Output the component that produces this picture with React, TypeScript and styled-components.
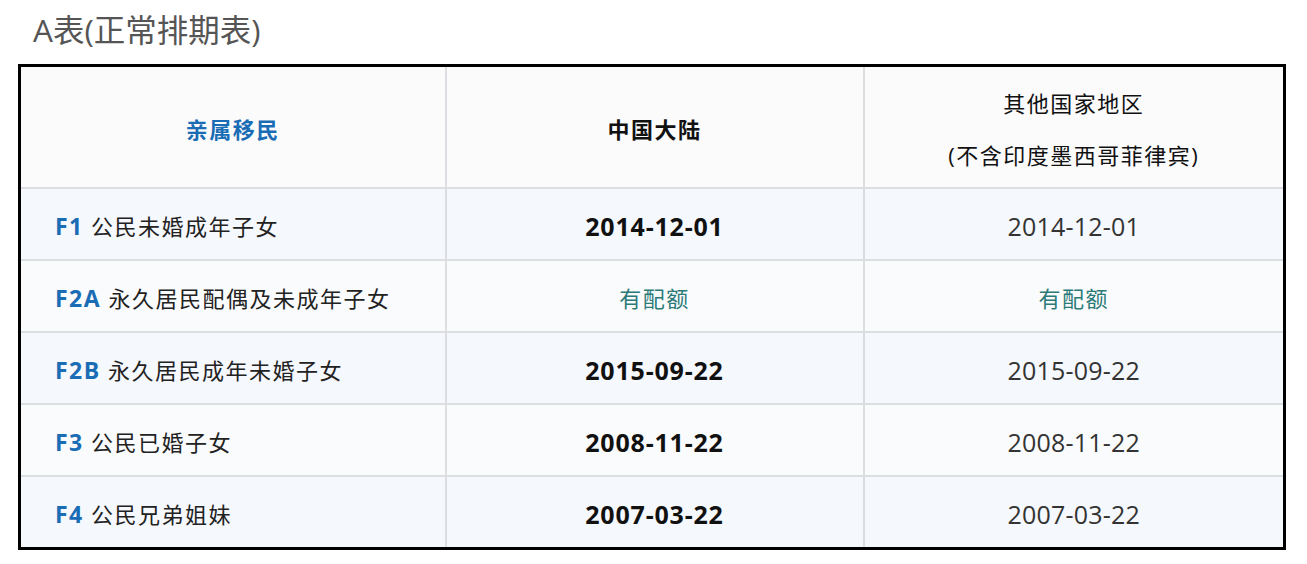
import React from "react";
import styled, { createGlobalStyle } from "styled-components";

const GlobalStyle = createGlobalStyle`
  body {
    margin: 0;
    background: #fff;
    font-family: "Open Sans", "Noto Sans CJK SC", sans-serif;
  }
`;

type Row = {
  code: string;
  label: string;
  china: string;
  other: string;
};

const rows: Row[] = [
  { code: "F1", label: "公民未婚成年子女", china: "2014-12-01", other: "2014-12-01" },
  { code: "F2A", label: "永久居民配偶及未成年子女", china: "有配额", other: "有配额" },
  { code: "F2B", label: "永久居民成年未婚子女", china: "2015-09-22", other: "2015-09-22" },
  { code: "F3", label: "公民已婚子女", china: "2008-11-22", other: "2008-11-22" },
  { code: "F4", label: "公民兄弟姐妹", china: "2007-03-22", other: "2007-03-22" },
];

const App: React.FC = () => {
  return (
    <Page>
      <GlobalStyle />
      <Title>A表(正常排期表)</Title>
      <Table>
        <colgroup>
          <col style={{ width: 426 }} />
          <col style={{ width: 418 }} />
          <col />
        </colgroup>
        <thead>
          <tr>
            <HeadCell $blue>亲属移民</HeadCell>
            <HeadCell>中国大陆</HeadCell>
            <HeadCell $light>
              其他国家地区
              <br />
              (不含印度墨西哥菲律宾)
            </HeadCell>
          </tr>
        </thead>
        <tbody>
          {rows.map((row, i) => {
            const quota = row.china === "有配额";
            return (
              <BodyRow key={row.code} $odd={i % 2 === 0}>
                <NameCell>
                  <Code>{row.code}</Code> {row.label}
                </NameCell>
                {quota ? (
                  <QuotaCell>{row.china}</QuotaCell>
                ) : (
                  <DateCell $bold>{row.china}</DateCell>
                )}
                {quota ? <QuotaCell>{row.other}</QuotaCell> : <DateCell>{row.other}</DateCell>}
              </BodyRow>
            );
          })}
        </tbody>
      </Table>
    </Page>
  );
};

export default App;

const Page = styled.div`
  padding: 0 21px 0 18px;
`;

const Title = styled.h3`
  margin: 0;
  padding: 10px 0 0 15px;
  height: 64px;
  box-sizing: border-box;
  font-size: 31.5px;
  font-weight: 400;
  line-height: 40px;
  color: #555;
`;

const Table = styled.table`
  width: 100%;
  table-layout: fixed;
  border-collapse: collapse;
  border: 3px solid #000;
  font-size: 22px;
  letter-spacing: 1.5px;
  color: #222;
`;

const HeadCell = styled.th<{ $blue?: boolean; $light?: boolean }>`
  background: #fbfbfc;
  border: 2px solid #dcdde1;
  padding: 10px 10px 6px;
  line-height: 52px;
  text-align: center;
  font-weight: ${(p) => (p.$light ? 400 : 700)};
  color: ${(p) => (p.$blue ? "#1a6db5" : "#111")};
`;

const BodyRow = styled.tr<{ $odd: boolean }>`
  background: ${(p) => (p.$odd ? "#f5f8fc" : "#fafbfc")};
`;

const Cell = styled.td`
  border: 2px solid #dcdde1;
  padding: 12px 10px 8px;
  line-height: 50px;
  white-space: nowrap;
`;

const NameCell = styled(Cell)`
  padding-left: 34px;
`;

const Code = styled.b`
  color: #1a6db5;
  font-weight: 700;
  font-size: 23px;
`;

const DateCell = styled(Cell)<{ $bold?: boolean }>`
  text-align: center;
  font-size: 25px;
  letter-spacing: ${(p) => (p.$bold ? "0.8px" : "0.2px")};
  font-weight: ${(p) => (p.$bold ? 700 : 400)};
  color: ${(p) => (p.$bold ? "#111" : "#333")};
`;

const QuotaCell = styled(Cell)`
  text-align: center;
  color: #2b7a78;
`;
